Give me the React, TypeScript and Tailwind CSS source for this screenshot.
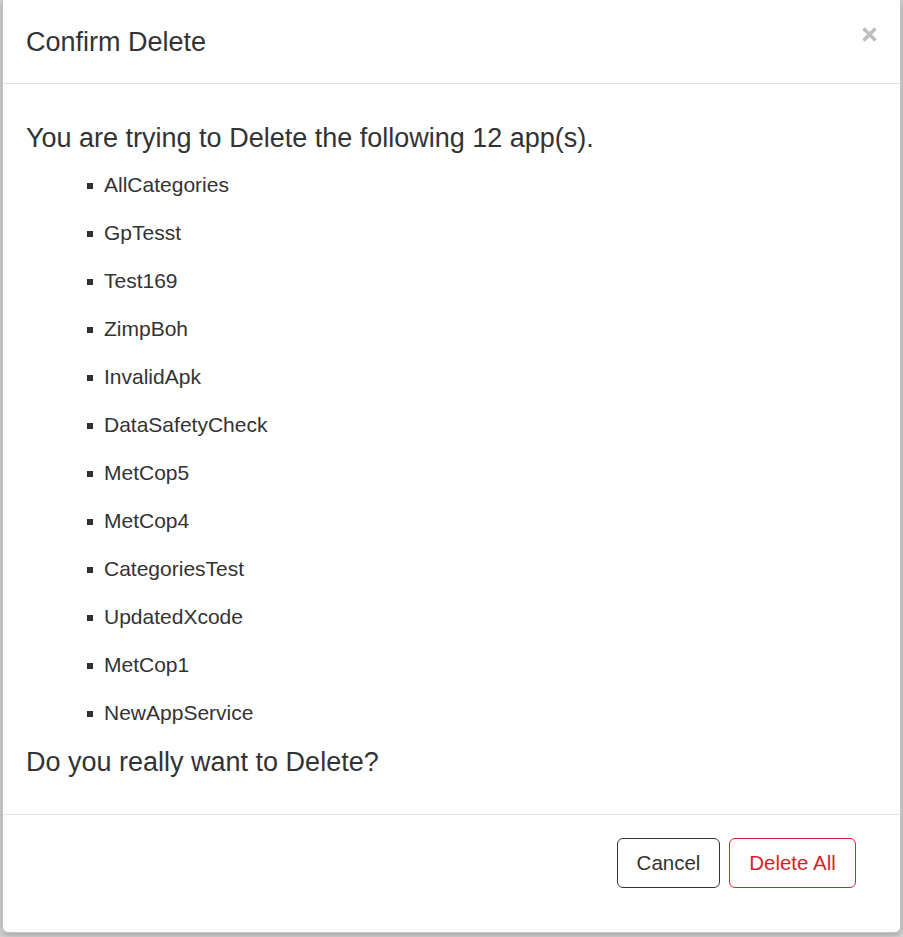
import React from "react";

const apps = [
  "AllCategories",
  "GpTesst",
  "Test169",
  "ZimpBoh",
  "InvalidApk",
  "DataSafetyCheck",
  "MetCop5",
  "MetCop4",
  "CategoriesTest",
  "UpdatedXcode",
  "MetCop1",
  "NewAppService",
];

export default function App() {
  return (
    <div
      className="w-[903px] h-[937px] bg-[#d4d4d4] overflow-hidden relative pl-[2px] pr-[2px]"
      style={{ fontFamily: '"Liberation Sans", Arial, Helvetica, sans-serif' }}
    >
      <div className="w-[899px] h-[933px] bg-white border border-[#c4c4c4] border-t-0 rounded-b-[6px] shadow-[0_2px_6px_rgba(0,0,0,0.25)] flex flex-col text-[#333]">
        <div className="h-[84px] border-b border-[#e5e5e5] flex items-start justify-between pl-[23px] pr-[23px] pt-[26px]">
          <h4 className="text-[27px] leading-[32px] m-0">Confirm Delete</h4>
          <button className="mt-[1px] mr-[0px] w-[15px] h-[15px] flex items-center justify-center" aria-label="Close">
            <svg width="15" height="15" viewBox="0 0 15 15">
              <path d="M1.5 1.5 L13.5 13.5 M13.5 1.5 L1.5 13.5" stroke="#bfbfbf" strokeWidth="3.6" />
            </svg>
          </button>
        </div>
        <div className="pl-[23px] pr-[23px] pt-[38px] pb-[36px] border-b border-[#e5e5e5]">
          <p className="text-[27px] leading-[32px] m-0">
            You are trying to Delete the following 12 app(s).
          </p>
          <ul className="mt-[7px] pl-[61px]">
            {apps.map((a) => (
              <li key={a} className="h-[48px] flex items-center text-[21px]">
                <span className="w-[6px] h-[6px] bg-[#333] mr-[11px] mt-[2px]" />
                <span>{a}</span>
              </li>
            ))}
          </ul>
          <p className="text-[27px] leading-[32px] m-0 mt-[9px]">Do you really want to Delete?</p>
        </div>
        <div className="flex-1 flex justify-end items-start pt-[23px] pr-[44px] gap-[9px]">
          <button className="h-[50px] w-[103px] border border-[#333] rounded-[6px] text-[20.5px] text-[#333] bg-white">
            Cancel
          </button>
          <button className="h-[50px] w-[127px] border border-[#dc2330] rounded-[6px] text-[20.5px] text-[#d81f2b] bg-white">
            Delete All
          </button>
        </div>
      </div>
    </div>
  );
}
